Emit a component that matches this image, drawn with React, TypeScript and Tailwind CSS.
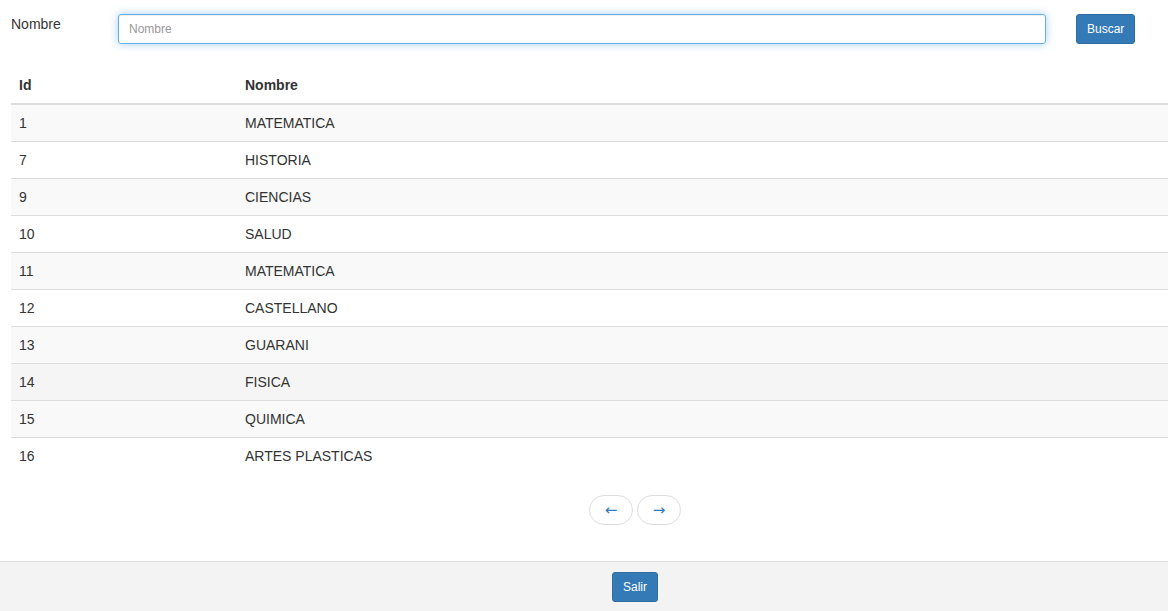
import React, { useState } from 'react';

const materias = [
    { id: 1, nombre: 'MATEMATICA' },
    { id: 7, nombre: 'HISTORIA' },
    { id: 9, nombre: 'CIENCIAS' },
    { id: 10, nombre: 'SALUD' },
    { id: 11, nombre: 'MATEMATICA' },
    { id: 12, nombre: 'CASTELLANO' },
    { id: 13, nombre: 'GUARANI' },
    { id: 14, nombre: 'FISICA' },
    { id: 15, nombre: 'QUIMICA' },
    { id: 16, nombre: 'ARTES PLASTICAS' }
];

export default function App() {
    const [nombre, setNombre] = useState('');

    return (
        <div className="w-[1168px] h-[611px] overflow-hidden bg-white font-['Liberation_Sans',Arial,sans-serif] text-[14px] leading-[20px] text-[#333]">
            <div className="w-[1270px] h-full flex flex-col">
                <div className="flex-1 px-[11px] pt-[14px]">
                    {/* Filtro */}
                    <div className="flex items-start">
                        <label className="w-[107px] leading-[20px]">Nombre</label>
                        <input
                            type="text"
                            value={nombre}
                            onChange={(e) => setNombre(e.target.value)}
                            placeholder="Nombre"
                            className="w-[928px] h-[30px] px-[10px] text-[12px] rounded-[3px] border border-[#66afe9] outline-none shadow-[inset_0_1px_1px_rgba(0,0,0,0.075),0_0_8px_rgba(102,175,233,0.6)] placeholder:text-[#999]"
                        />
                        <button className="ml-[30px] h-[30px] px-[10px] text-[12px] text-white bg-[#337ab7] border border-[#2e6da4] rounded-[3px]">
                            Buscar
                        </button>
                    </div>

                    {/* Tabla */}
                    <table className="mt-[23px] w-full border-collapse">
                        <thead>
                            <tr>
                                <th className="w-[226px] p-[8px] text-left font-bold align-bottom border-b-2 border-[#ddd]">Id</th>
                                <th className="p-[8px] text-left font-bold align-bottom border-b-2 border-[#ddd]">Nombre</th>
                            </tr>
                        </thead>
                        <tbody>
                            {materias.map((m, i) => (
                                <tr
                                    key={m.id}
                                    className={i === 7 ? 'bg-[#f5f5f5]' : i % 2 === 0 ? 'bg-[#f9f9f9]' : 'bg-white'}
                                >
                                    <td className="p-[8px] border-t border-[#ddd]">{m.id}</td>
                                    <td className="p-[8px] border-t border-[#ddd]">{m.nombre}</td>
                                </tr>
                            ))}
                        </tbody>
                    </table>

                    {/* Paginador */}
                    <div className="mt-[21px] flex justify-center gap-[4px]">
                        <button className="w-[44px] h-[30px] rounded-[15px] border border-[#ddd] bg-white text-[#337ab7] text-[15px] font-['DejaVu_Sans',sans-serif]">
                            ←
                        </button>
                        <button className="w-[44px] h-[30px] rounded-[15px] border border-[#ddd] bg-white text-[#337ab7] text-[15px] font-['DejaVu_Sans',sans-serif]">
                            →
                        </button>
                    </div>
                </div>

                {/* Pie */}
                <div className="h-[50px] shrink-0 border-t border-[#ddd] bg-[#f3f3f3] flex justify-center pt-[10px]">
                    <button className="h-[30px] px-[10px] text-[12px] text-white bg-[#337ab7] border border-[#2e6da4] rounded-[3px]">
                        Salir
                    </button>
                </div>
            </div>
        </div>
    );
}
